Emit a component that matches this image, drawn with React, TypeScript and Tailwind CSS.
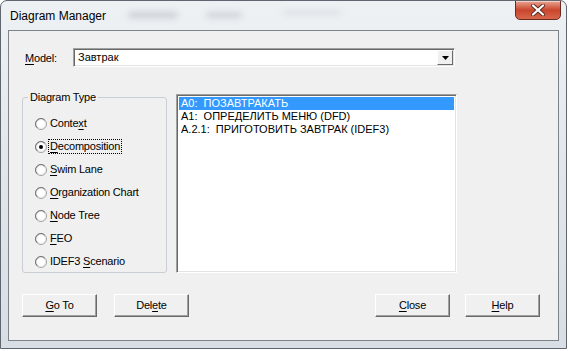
import React from "react";

const ui = { fontFamily: '"Liberation Sans", Arial, sans-serif' };

// classic win radio
const Radio = ({ checked }: { checked?: boolean }) => (
  <svg width="12" height="12" viewBox="0 0 12 12" className="shrink-0">
    <circle cx="6" cy="6" r="5.5" fill="#fff" stroke="#a0a0a0" />
    <path d="M2.2 9.8 A5.3 5.3 0 0 1 9.8 2.2" fill="none" stroke="#6d6d6d" strokeWidth="1" />
    <circle cx="6" cy="6" r="4.4" fill="none" stroke="#e2e2e2" strokeWidth="0.8" />
    {checked && <circle cx="6" cy="6" r="2" fill="#000" />}
  </svg>
);

const M = ({ children }: { children: React.ReactNode }) => (
  <span className="underline underline-offset-[2px] decoration-[1px]">{children}</span>
);

const types: { pre: string; key: string; post: string; checked?: boolean }[] = [
  { pre: "Conte", key: "x", post: "t" },
  { pre: "", key: "D", post: "ecomposition", checked: true },
  { pre: "", key: "S", post: "wim Lane" },
  { pre: "", key: "O", post: "rganization Chart" },
  { pre: "", key: "N", post: "ode Tree" },
  { pre: "", key: "F", post: "EO" },
  { pre: "IDEF3 ", key: "S", post: "cenario" },
];

const diagrams = [
  "A0:  ПОЗАВТРАКАТЬ",
  "A1:  ОПРЕДЕЛИТЬ МЕНЮ (DFD)",
  "A.2.1:  ПРИГОТОВИТЬ ЗАВТРАК (IDEF3)",
];

const Btn = ({ pre, k, post }: { pre: string; k: string; post: string }) => (
  <button className="w-[75px] h-[23px] bg-[#f0f0f0] border border-t-white border-l-white border-b-[#696969] border-r-[#696969] shadow-[inset_-1px_-1px_0_#a0a0a0] text-[11px] tracking-[-0.2px] text-black flex items-center justify-center">
    {pre}
    <M>{k}</M>
    {post}
  </button>
);

export default function App() {
  return (
    <div className="w-[569px] h-[351px] bg-white" style={ui}>
      <div className="w-[567px] h-[349px] flex flex-col rounded-t-[7px] border border-[#5f6670] bg-gradient-to-b from-[#eef1f4] via-[#e2e6eb] to-[#d9dee4] overflow-hidden">
        {/* title bar */}
        <div className="h-[29px] flex items-start pl-[9px] pr-[5px]">
          <span className="mt-[6px] text-[12px] text-black">Diagram Manager</span>
          <span className="mt-[11px] ml-[22px] w-[50px] h-[6px] rounded-full bg-[#b3bac3] blur-[3px] opacity-60" />
          <span className="mt-[11px] ml-[28px] w-[36px] h-[6px] rounded-full bg-[#b3bac3] blur-[3px] opacity-50" />
          <span className="mt-[9px] ml-[40px] w-[60px] h-[5px] rounded-full bg-[#c3c9d0] blur-[3px] opacity-40" />
          <div className="ml-auto -mt-px w-[46px] h-[20px] rounded-b-[5px] border border-[#6b2a1e] bg-gradient-to-b from-[#e8a493] via-[#c9452c] to-[#d6664a] flex items-center justify-center shadow-[inset_0_1px_0_rgba(255,255,255,0.5)]">
            <svg width="14" height="12" viewBox="0 0 14 12">
              <path d="M2 1.5 L12 10.5 M12 1.5 L2 10.5" stroke="#5a2b22" strokeWidth="4" strokeLinecap="round" />
              <path d="M2 1.5 L12 10.5 M12 1.5 L2 10.5" stroke="#fff" strokeWidth="2.2" strokeLinecap="round" />
            </svg>
          </div>
        </div>

        {/* client area */}
        <div className="flex-1 mx-[7px] mb-[7px] border border-[#7d838b] bg-[#f0f0f0] flex flex-col text-[11px] tracking-[-0.2px] text-black">
          {/* model row */}
          <div className="flex items-center mt-[17px] pl-[16px]">
            <span className="w-[48px] mt-[2px]">
              <M>M</M>odel:
            </span>
            <div className="w-[382px] h-[19px] bg-white border border-t-[#a0a0a0] border-l-[#a0a0a0] border-b-white border-r-white shadow-[inset_1px_1px_0_#696969,inset_-1px_-1px_0_#e3e3e3] flex items-center">
              <span className="pl-[4px] flex-1 tracking-normal">Завтрак</span>
              <div className="w-[16px] h-[15px] mr-px bg-[#f0f0f0] border border-t-white border-l-white border-b-[#696969] border-r-[#696969] flex items-center justify-center">
                <svg width="7" height="4" viewBox="0 0 7 4">
                  <path d="M0 0 H7 L3.5 4 Z" fill="#000" />
                </svg>
              </div>
            </div>
          </div>

          {/* type + list */}
          <div className="flex items-start mt-[24px] pl-[13px] gap-[9px]">
            <fieldset className="w-[145px] h-[182px] border border-[#c9ced4] rounded-[3px] pl-[12px] pt-[8px]">
              <legend className="-ml-[7px] px-[2px] text-[11px] leading-[13px]">Diagram Type</legend>
              <div className="flex flex-col">
                {types.map((t, i) => (
                  <div key={i} className="h-[23px] flex items-center gap-[1px]">
                    <Radio checked={t.checked} />
                    <span className={t.checked ? "border border-dotted border-black px-px leading-[13px]" : "px-px border border-transparent leading-[13px]"}>
                      {t.pre}
                      <M>{t.key}</M>
                      {t.post}
                    </span>
                  </div>
                ))}
              </div>
            </fieldset>
            <div className="mt-[3px] w-[281px] h-[179px] bg-white border border-t-[#a0a0a0] border-l-[#a0a0a0] border-b-white border-r-white shadow-[inset_1px_1px_0_#696969,inset_-1px_-1px_0_#e3e3e3] p-[2px] flex flex-col tracking-normal">
              {diagrams.map((d, i) => (
                <div
                  key={i}
                  className={
                    "h-[13px] leading-[13px] pl-[2px] whitespace-pre " +
                    (i === 0 ? "bg-[#3399ff] text-white" : "text-black")
                  }
                >
                  {d}
                </div>
              ))}
            </div>
          </div>

          {/* buttons */}
          <div className="flex mt-[21px] pl-[13px] pr-[18px]">
            <Btn pre="" k="G" post="o To" />
            <div className="ml-[17px]">
              <Btn pre="Del" k="e" post="te" />
            </div>
            <div className="ml-auto flex gap-[15px]">
              <Btn pre="" k="C" post="lose" />
              <Btn pre="" k="H" post="elp" />
            </div>
          </div>
        </div>
      </div>
    </div>
  );
}
